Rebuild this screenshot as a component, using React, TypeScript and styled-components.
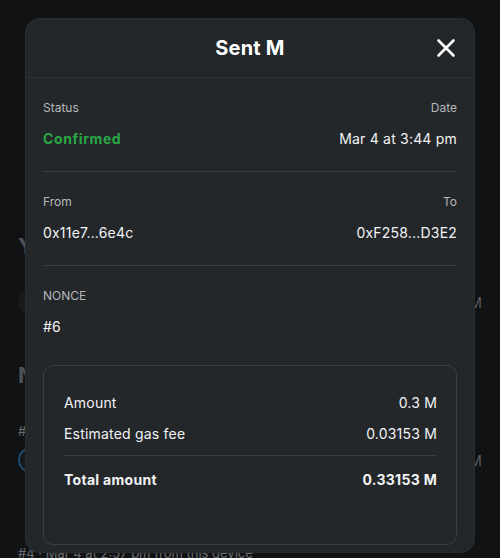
import React from "react";
import styled, { createGlobalStyle } from "styled-components";

const Global = createGlobalStyle`
  html, body { margin: 0; padding: 0; }
  body {
    background: #111214;
    font-family: "Inter", "Lato", sans-serif;
    width: 500px;
    height: 558px;
    overflow: hidden;
  }
`;

const Page = styled.div`
  position: relative;
  width: 500px;
  height: 558px;
  overflow: hidden;
  background: #111214;
`;

const BgContent = styled.div`
  display: flex;
  flex-direction: column;
  padding: 232px 18px 0 18px;
  color: #55585c;
`;

const BgHeading = styled.div<{ $top: number }>`
  font-size: 22px;
  font-weight: 700;
  color: #4f5256;
  margin-top: ${(p) => p.$top}px;
  line-height: 28px;
`;

const BgRow = styled.div<{ $top: number }>`
  display: flex;
  align-items: center;
  justify-content: space-between;
  margin-top: ${(p) => p.$top}px;
  height: 24px;
`;

const BgAvatar = styled.div<{ $ring?: boolean }>`
  width: 22px;
  height: 22px;
  border-radius: 50%;
  background: #17191b;
  border: 2px solid ${(p) => (p.$ring ? "#1f4766" : "#17191b")};
`;

const BgAmount = styled.span`
  font-size: 14px;
  color: #5a5d61;
`;

const BgSmall = styled.div<{ $top: number }>`
  font-size: 13px;
  color: #6a6d71;
  margin-top: ${(p) => p.$top}px;
`;

const Modal = styled.div`
  position: absolute;
  left: 25px;
  top: 18px;
  width: 450px;
  height: 535px;
  box-sizing: border-box;
  background: #24272a;
  border: 1px solid #2a2d30;
  border-radius: 14px;
  display: flex;
  flex-direction: column;
  color: #ffffff;
`;

const Header = styled.div`
  position: relative;
  height: 58px;
  display: flex;
  align-items: center;
  justify-content: center;
  border-bottom: 1px solid #2e3134;
`;

const Title = styled.h2`
  margin: 0;
  font-size: 20px;
  font-weight: 700;
  color: #ffffff;
  letter-spacing: 0.2px;
`;

const CloseButton = styled.button`
  position: absolute;
  right: 17px;
  top: 18px;
  width: 22px;
  height: 22px;
  padding: 0;
  background: none;
  border: none;
  display: flex;
  align-items: center;
  justify-content: center;
  cursor: pointer;
`;

const Body = styled.div`
  display: flex;
  flex-direction: column;
  padding: 0 17px;
  flex: 1;
`;

const Section = styled.div<{ $divider?: boolean }>`
  display: flex;
  flex-direction: column;
  padding: 21px 0 ${(p) => (p.$divider ? "22px" : "0")} 0;
  border-bottom: ${(p) => (p.$divider ? "1px solid #3a3d41" : "none")};
`;

const Row = styled.div`
  display: flex;
  justify-content: space-between;
  align-items: center;
`;

const Label = styled.span`
  font-size: 12px;
  color: #b4b7bb;
  line-height: 18px;
`;

const Value = styled.span<{ $green?: boolean; $bold?: boolean }>`
  font-size: 14px;
  line-height: 20px;
  color: ${(p) => (p.$green ? "#28a745" : "#f2f3f4")};
  font-weight: ${(p) => (p.$bold ? 700 : 400)};
  letter-spacing: ${(p) => (p.$bold ? "0.6px" : "0.2px")};
`;

const ValueRow = styled(Row)`
  margin-top: 12px;
`;

const Summary = styled.div`
  margin-top: 28px;
  border: 1px solid #3a3d41;
  border-radius: 10px;
  height: 180px;
  box-sizing: border-box;
  padding: 26px 19px 0 20px;
  display: flex;
  flex-direction: column;
`;

const SumRow = styled.div<{ $top?: number }>`
  display: flex;
  justify-content: space-between;
  align-items: center;
  height: 20px;
  margin-top: ${(p) => p.$top ?? 0}px;
`;

const SumText = styled.span<{ $bold?: boolean }>`
  font-size: 14px;
  color: #f2f3f4;
  font-weight: ${(p) => (p.$bold ? 700 : 400)};
  letter-spacing: ${(p) => (p.$bold ? "0.3px" : "0.2px")};
`;

const SumDivider = styled.div`
  height: 1px;
  background: #383b3f;
  margin-top: 12px;
`;

export default function App() {
  return (
    <Page>
      <Global />
      <BgContent>
        <BgHeading $top={0}>Your activity</BgHeading>
        <BgRow $top={30}>
          <BgAvatar />
          <BgAmount>-0.3 M</BgAmount>
        </BgRow>
        <BgHeading $top={47}>Nonce</BgHeading>
        <BgSmall $top={34}>#5</BgSmall>
        <BgRow $top={9}>
          <BgAvatar $ring />
          <BgAmount>-0.1 M</BgAmount>
        </BgRow>
        <BgSmall $top={73}>#4 · Mar 4 at 2:57 pm from this device</BgSmall>
      </BgContent>

      <Modal>
        <Header>
          <Title>Sent M</Title>
          <CloseButton aria-label="Close">
            <svg width="18" height="18" viewBox="0 0 18 18">
              <path d="M1.5 1.5 L16.5 16.5 M16.5 1.5 L1.5 16.5" stroke="#ffffff" strokeWidth="2.6" strokeLinecap="round" />
            </svg>
          </CloseButton>
        </Header>
        <Body>
          <Section $divider>
            <Row>
              <Label>Status</Label>
              <Label>Date</Label>
            </Row>
            <ValueRow>
              <Value $green $bold>Confirmed</Value>
              <Value>Mar 4 at 3:44 pm</Value>
            </ValueRow>
          </Section>
          <Section $divider>
            <Row>
              <Label>From</Label>
              <Label>To</Label>
            </Row>
            <ValueRow>
              <Value>0x11e7...6e4c</Value>
              <Value>0xF258...D3E2</Value>
            </ValueRow>
          </Section>
          <Section>
            <Row>
              <Label>NONCE</Label>
            </Row>
            <ValueRow>
              <Value>#6</Value>
            </ValueRow>
          </Section>
          <Summary>
            <SumRow>
              <SumText>Amount</SumText>
              <SumText>0.3 M</SumText>
            </SumRow>
            <SumRow $top={11}>
              <SumText>Estimated gas fee</SumText>
              <SumText>0.03153 M</SumText>
            </SumRow>
            <SumDivider />
            <SumRow $top={13}>
              <SumText $bold>Total amount</SumText>
              <SumText $bold>0.33153 M</SumText>
            </SumRow>
          </Summary>
        </Body>
      </Modal>
    </Page>
  );
}
